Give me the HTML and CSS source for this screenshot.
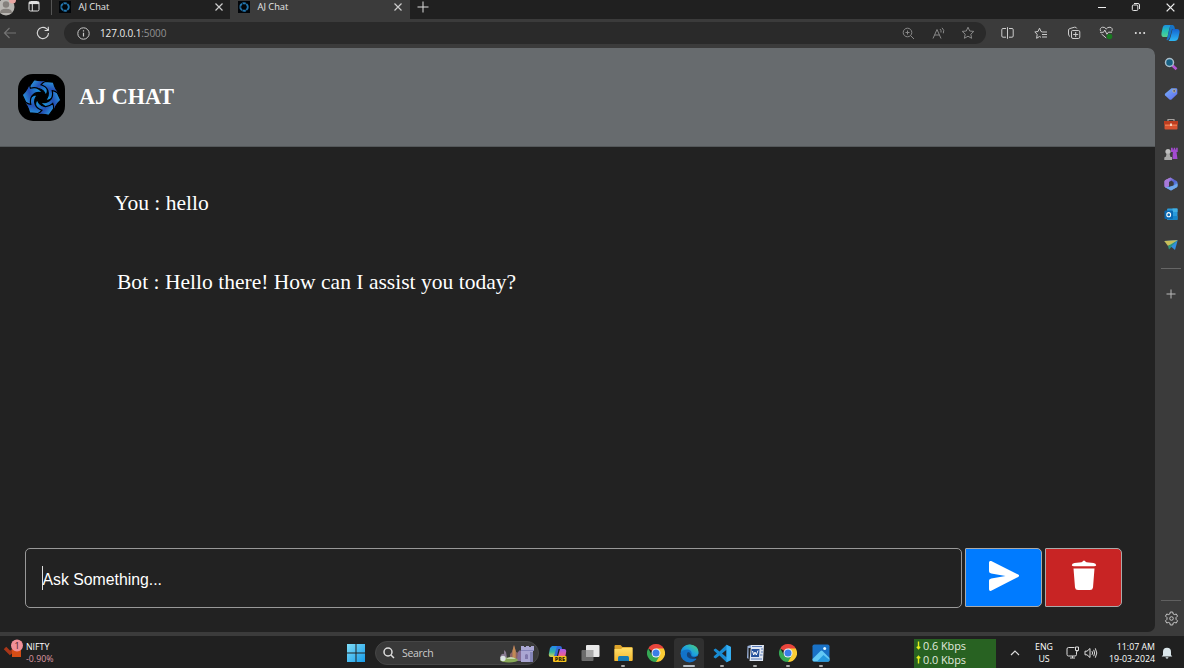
FILE: index.html
```html
<!DOCTYPE html>
<html lang="en">
<head>
<meta charset="utf-8">
<title>AJ Chat</title>
<link rel="stylesheet" href="styles.css">
</head>
<body>
<svg class="defs" aria-hidden="true">
  <defs>
    <linearGradient id="bladeFill" x1="0" y1="0" x2="1" y2=".7"><stop offset="0" stop-color="#2cb4ee"/><stop offset=".5" stop-color="#2450b4"/><stop offset="1" stop-color="#1b9be0"/></linearGradient>
    <linearGradient id="edgeA" x1="0" y1="1" x2="1" y2="0"><stop offset="0" stop-color="#0b6fcb"/><stop offset=".5" stop-color="#1fa4dd"/><stop offset="1" stop-color="#4fd66c"/></linearGradient>
    <linearGradient id="copA" x1="0" y1="0" x2="0" y2="1"><stop offset="0" stop-color="#1c8fe0"/><stop offset=".5" stop-color="#25c1b4"/><stop offset="1" stop-color="#58d08c"/></linearGradient>
    <linearGradient id="copB" x1="0" y1="0" x2="0" y2="1"><stop offset="0" stop-color="#1462cf"/><stop offset="1" stop-color="#2db8f4"/></linearGradient>
    <linearGradient id="preA" x1="0" y1="0" x2="0" y2="1"><stop offset="0" stop-color="#2186ef"/><stop offset=".55" stop-color="#35b5a0"/><stop offset="1" stop-color="#e4d646"/></linearGradient>
    <linearGradient id="preB" x1="0" y1="0" x2="0" y2="1"><stop offset="0" stop-color="#a45df0"/><stop offset=".6" stop-color="#e65ca0"/><stop offset="1" stop-color="#f68353"/></linearGradient>
    <linearGradient id="tagFill" x1="0" y1="0" x2="1" y2="1"><stop offset="0" stop-color="#77b2f6"/><stop offset="1" stop-color="#606af0"/></linearGradient>
    <linearGradient id="winFill" x1="0" y1="0" x2="1" y2="1"><stop offset="0" stop-color="#7fddf8"/><stop offset="1" stop-color="#169be8"/></linearGradient>
    <linearGradient id="folderFill" x1="0" y1="0" x2="0" y2="1"><stop offset="0" stop-color="#ffdf68"/><stop offset="1" stop-color="#f4b72e"/></linearGradient>
    <linearGradient id="officeFill" x1="0" y1="0" x2="1" y2="1"><stop offset="0" stop-color="#d696ed"/><stop offset=".5" stop-color="#5361d1"/><stop offset="1" stop-color="#64b8f4"/></linearGradient>
    <path id="blade" d="M-12.300 -11.500 L-7.500 -18.300 Q0 -16 7.500 -18.300 Q4 -16.500 2.500 -14.500 Q8.500 -9.500 4.500 -1.500 Q3 -8 -3 -9.200 Q-7.500 -9.800 -11.500 -6 Q-12.800 -9 -12.300 -11.500Z" fill="url(#bladeFill)" stroke="#000" stroke-width="1.200"/>
    <symbol id="swirl" viewBox="-24 -24 48 48">
      <use href="#blade"/><use href="#blade" transform="rotate(60)"/><use href="#blade" transform="rotate(120)"/><use href="#blade" transform="rotate(180)"/><use href="#blade" transform="rotate(240)"/><use href="#blade" transform="rotate(300)"/>
    </symbol>
    <symbol id="favswirl" viewBox="0 0 12 12">
      <circle cx="6" cy="6" r="3.800" fill="none" stroke="#2376ae" stroke-width="1.900" stroke-dasharray="3.400 .58"/>
    </symbol>
    <symbol id="chrome" viewBox="-9 -9 18 18">
      <path d="M0 0 L-7.800 -4.500 A9 9 0 0 1 7.800 -4.500Z" fill="#e8453c"/>
      <path d="M0 0 L7.800 -4.500 A9 9 0 0 1 0 9Z" fill="#fbcc34"/>
      <path d="M0 -4.500 H7.800 L3.500 1Z" fill="#fbcc34"/>
      <path d="M-7.800 -4.500 L-3.900 2.250 L3.900 2.250 L0 9 A9 9 0 0 1 -7.800 -4.500Z" fill="#35a854"/>
      <circle r="4.500" fill="#f1f5fb"/><circle r="3.500" fill="#3b7ee8"/>
    </symbol>
    <symbol id="close" viewBox="0 0 10 10"><path d="M1.500 1.500 L8.500 8.500 M8.500 1.500 L1.500 8.500" stroke="currentColor" stroke-width="1.200"/></symbol>
  </defs>
</svg>

<div class="desktop">
  <div class="tabstrip">
    <div class="profile"><svg width="16" height="16" viewBox="0 0 16 16"><circle cx="6" cy="7" r="8.500" fill="#b8b6b2"/><circle cx="6" cy="4.500" r="3.200" fill="#85817d"/><path d="M0 13 Q0 8.800 6 8.800 Q12 8.800 12 13Z" fill="#85817d"/><circle cx="12.500" cy="0" r="3.500" fill="#e8a6a2"/></svg></div>
    <div class="workspaces"><svg width="12" height="12" viewBox="0 0 12 12" fill="none" stroke="#e0e0e0"><rect x="1" y="1.500" width="10" height="9.500" rx="1.500"/><path d="M1 3 H11" stroke-width="2.200"/><path d="M4.300 4 V11"/></svg></div>
    <div class="tab">
      <span class="favicon"><svg width="12" height="12"><use href="#favswirl"/></svg></span><span class="tab-title">AJ Chat</span><svg class="tab-close" width="10" height="10"><use href="#close"/></svg>
    </div>
    <div class="tab active">
      <span class="favicon"><svg width="12" height="12"><use href="#favswirl"/></svg></span><span class="tab-title">AJ Chat</span><svg class="tab-close" width="10" height="10"><use href="#close"/></svg>
    </div>
    <div class="new-tab"><svg width="12" height="12" viewBox="0 0 12 12" stroke="#dedede"><path d="M6 .5 V11.500 M.5 6 H11.500"/></svg></div>
    <div class="window-controls">
      <svg width="10" height="10" viewBox="0 0 10 10" stroke="#eee"><path d="M1 5.500 H9"/></svg>
      <svg width="10" height="10" viewBox="0 0 10 10" fill="none" stroke="#e6e6e6"><rect x="1.300" y="3" width="5.500" height="5.500" rx="1"/><path d="M3 1.500 H7 Q8.500 1.500 8.500 3 V7"/></svg>
      <svg width="11" height="11" class="bright"><use href="#close"/></svg>
    </div>
  </div>

  <div class="toolbar">
    <svg class="back" width="14" height="14" viewBox="0 0 14 14" fill="none" stroke="#747474" stroke-width="1.200"><path d="M13 7 H1.500 M6.500 2 L1.500 7 L6.500 12"/></svg>
    <svg class="reload" width="14" height="14" viewBox="0 0 14 14" fill="none" stroke="#d8d8d8" stroke-width="1.100"><path d="M12.500 7 A5.600 5.600 0 1 1 10.500 2.700 L12.200 4.300 M12.300 .8 V4.500 H8.600"/></svg>
    <div class="address">
      <svg class="info" width="13" height="13" viewBox="0 0 13 13" fill="none" stroke="#c9c9c9"><circle cx="6.500" cy="6.500" r="5.700"/><path d="M6.500 5.700 V9.500 M6.500 3.300 V4.500" stroke-width="1.200"/></svg>
      <span class="url"><span class="host">127.0.0.1</span>:5000</span>
      <div class="address-icons">
        <svg width="13" height="13" viewBox="0 0 13 13" fill="none" stroke="#888"><circle cx="5.500" cy="5.500" r="4.300"/><path d="M8.600 8.600 L12 12 M3.500 5.500 H7.500 M5.500 3.500 V7.500"/></svg>
        <svg width="14" height="13" viewBox="0 0 14 13" fill="none" stroke="#888"><path d="M2 11.500 L6 2.500 L10 11.500 M3.600 8 H8.400 M9 2 Q10.500 3.500 10 5.500 M11 .8 Q13.800 3.200 12.300 6.300"/></svg>
        <svg width="14" height="14" viewBox="0 0 14 14" fill="none" stroke="#888"><path d="M7 1.200 L8.700 5 L12.800 5.400 L9.800 8.200 L10.600 12.300 L7 10.200 L3.400 12.300 L4.200 8.200 L1.200 5.400 L5.300 5Z"/></svg>
      </div>
    </div>
    <div class="tools">
      <svg width="13" height="12" viewBox="0 0 13 12" fill="none" stroke="#ccc"><path d="M5 1.500 H2 Q.8 1.500 .8 2.700 V9 Q.8 10.200 2 10.200 H5 M8 1.500 H11 Q12.200 1.500 12.200 2.700 V9 Q12.200 10.200 11 10.200 H8 M6.500 .2 V11.800"/></svg>
      <svg width="14" height="13" viewBox="0 0 14 13" fill="none" stroke="#ccc"><path d="M8.500 5 L7 4.500 L5.500 1.200 L4 4.500 L.8 5 L3.200 7.300 L2.600 11.300 L5.500 9.500 L7 10.300 M8.500 5 H13 M8 7.500 H13 M8 10 H13"/></svg>
      <svg width="14" height="14" viewBox="0 0 14 14" fill="none" stroke="#ccc"><path d="M3 10.500 Q1.500 10 1.500 8 V5 Q1 3 3 2.500 L7.500 1.200 Q9.500 1 9.800 2.500 M5.500 4.500 H11.500 Q12.800 4.500 12.800 6 V11 Q12.800 12.500 11.500 12.500 H6 Q4.500 12.500 4.500 11 V5.800 Q4.500 4.500 5.500 4.500 M8.700 6 V11 M6.200 8.500 H11.200"/></svg>
      <svg width="15" height="14" viewBox="0 0 15 14" fill="none" stroke="#ccc"><path d="M1.500 5 Q.5 1.700 3.700 1.200 Q6 1 7.200 3 Q8.500 1 11 1.200 Q14.300 2 12.800 5.300 M2.500 8 L7.200 12 M1 6.300 H4.500 L5.800 4 L8 8.300 L9.400 6.200 H13"/><circle cx="10.500" cy="10.500" r="2.800" fill="#187a20" stroke="none"/></svg>
      <svg width="12" height="12" viewBox="0 0 12 12" fill="#e4e4e4"><circle cx="1.800" cy="6" r="1"/><circle cx="6" cy="6" r="1"/><circle cx="10.200" cy="6" r="1"/></svg>
    </div>
    <div class="copilot"><svg width="19" height="18" viewBox="0 0 19 18"><path d="M4 1 H10.500 Q8.700 2 8 6 L6.500 13 H2.500 Q0 13 .5 9 L1.700 3.500 Q2.200 1 4 1Z" fill="url(#copA)"/><path d="M9.500 1 H12 Q13.500 1.500 14 5 H11 L9 13 Q8 17 5.500 16 L6.700 12Z" fill="#1673c5"/><path d="M11.500 5 H16 Q19 5 18.500 8.500 L17.300 14 Q16.500 17 13.500 17 H7.500 Q9 16 9.700 12.500Z" fill="url(#copB)"/></svg></div>
  </div>

  <div class="workspace">
    <main class="page">
      <header class="chat-header">
        <div class="logo"><svg width="47" height="47"><use href="#swirl"/></svg></div>
        <h1>AJ CHAT</h1>
      </header>
      <section class="messages">
        <p class="message you">You : hello</p>
        <p class="message bot">Bot : Hello there! How can I assist you today?</p>
      </section>
      <div class="composer">
        <div class="prompt"><span class="caret"></span><span>Ask Something...</span></div>
        <button class="send" aria-label="Send"><svg width="32" height="32" viewBox="0 0 32 32" fill="#fff"><path d="M1 2.500 Q1 .3 3.200 1.100 L30.200 14.600 Q32 15.800 30.200 17 L3.200 30.800 Q1 31.400 1 29.200 V20.500 Q1 18.600 3.300 18.400 L17.500 15.900 L3.300 13.600 Q1 13.200 1 11.200Z"/></svg></button>
        <button class="clear" aria-label="Clear"><svg width="26" height="32" viewBox="0 0 26 32" fill="#fff"><path d="M.8 5.300 Q1 3.200 3.500 2.900 L10.500 2.200 Q11.500 1.900 12 1 Q13 -.2 14 1 Q14.500 1.900 15.500 2.200 L22.500 2.900 Q25 3.200 25.200 5.300 Q25 6.200 23 6.200 H3 Q1 6.200 .8 5.300Z M2.500 8.500 H23.500 L22 27.500 Q21.700 30 19 30 H7 Q4.300 30 4 27.500Z"/></svg></button>
      </div>
    </main>
    <aside class="sidebar">
      <div class="side-icon"><svg width="14" height="14" viewBox="0 0 14 14"><path d="M8.500 8.500 L12.500 12.200" stroke="#b455d5" stroke-width="2.600"/><circle cx="5.500" cy="5.500" r="4" fill="#176184" stroke="#a9bdca" stroke-width="1.500"/></svg></div>
      <div class="side-icon"><svg width="14" height="14" viewBox="0 0 14 14"><path d="M7.500 1.200 H12 Q13.300 1.200 13.300 2.500 V7 L7.500 12.500 Q6.500 13.200 5.500 12.400 L1.200 8.500 Q.3 7.500 1.200 6.500Z" fill="url(#tagFill)"/><circle cx="10.200" cy="3.900" r="1.400" fill="#4a5587" stroke="#e3c875" stroke-width=".7"/></svg></div>
      <div class="side-icon"><svg width="14" height="12" viewBox="0 0 14 12"><path d="M4 3 V1.500 H10 V3" fill="none" stroke="#a6a19e" stroke-width="1.200"/><rect x=".5" y="3" width="13" height="8.500" rx="1" fill="#d65331"/><path d="M0 3 H14 V6.500 H0Z" fill="#bb3d20"/><path d="M1 7.200 H13" stroke="#f58a5c"/><rect x="6" y="5.500" width="2" height="2.500" fill="#f2d2bd"/></svg></div>
      <div class="side-icon"><svg width="14" height="14" viewBox="0 0 14 14"><path d="M7 .8 H8.700 V2.500 H9.700 V.8 H11.200 V2.500 H12.200 V.8 H13.700 V5 H12.500 L13.500 12 H8.500 L8.800 5 H7Z" fill="#a44bd1"/><circle cx="4" cy="4.500" r="2.600" fill="#bebebe"/><path d="M2.500 6.500 H5.500 L6.500 10 H8 V13 H.3 V10.500 L2 9.500Z" fill="#a9a9a9"/></svg></div>
      <div class="side-icon"><svg width="14" height="14" viewBox="0 0 14 14"><path d="M6.500 .5 L12.500 4 Q13.500 4.700 13.500 6 V9 Q13.300 10 12.300 10.600 L7 13.500 L1.500 10.500 Q.5 10 .5 8.700 V4.500 Q.5 3.500 1.500 3Z" fill="url(#officeFill)"/><path d="M7.500 3.500 L9.700 5.500 V8.500 L5 10 V5Z" fill="#3b3b3d"/><path d="M.5 9 L5 10 L9.700 8.500 L13.500 6.500 V9 Q13.300 10 12.300 10.600 L7 13.500 L1.500 10.500Z" fill="#70a9ec"/><path d="M6.500 .5 Q4.500 3 5 9 L1.500 10.500 Q.5 10 .5 8.700 V4.500 Q.5 3.500 1.500 3Z" fill="#a879d8"/></svg></div>
      <div class="side-icon"><svg width="14" height="13" viewBox="0 0 14 13"><rect x="3" y=".5" width="10.500" height="11.500" rx="1" fill="#299bdc"/><path d="M8.500 .5 H13.500 V4 H8.500Z" fill="#42b0e3"/><path d="M4 8 H13.500 V12 H4Z" fill="#1685c9"/><rect x=".5" y="2.500" width="8.500" height="8.500" rx="1" fill="#0968b1"/><ellipse cx="4.700" cy="6.700" rx="1.900" ry="2.100" fill="none" stroke="#fff" stroke-width="1.100"/></svg></div>
      <div class="side-icon"><svg width="14" height="12" viewBox="0 0 14 12"><path d="M.3 2 L13.700 1.300 L7 7Z" fill="#7fc8dd"/><path d="M.3 2 L4 7 L13.700 1.300Z" fill="#c7be5a"/><path d="M4 7 L13.700 1.300 L5 10.500Z" fill="#2d977b"/><path d="M7 7.500 L13.700 1.300 L11 11Z" fill="#338ede"/></svg></div>
      <div class="side-rule"></div>
      <div class="side-add"><svg width="10" height="10" viewBox="0 0 10 10" stroke="#bbb"><path d="M5 .5 V9.500 M.5 5 H9.500"/></svg></div>
      <div class="side-bottom">
        <div class="side-line"></div>
        <svg width="15" height="15" viewBox="0 0 15 15" fill="none" stroke="#c8c8c8"><path d="M6.300 1 H8.700 L9.200 3 L10.300 3.600 L12.300 3 L13.500 5.100 L12 6.600 V8.300 L13.500 9.800 L12.300 12 L10.300 11.400 L9.200 12 L8.700 14 H6.300 L5.800 12 L4.700 11.400 L2.700 12 L1.500 9.800 L3 8.300 V6.600 L1.500 5.100 L2.700 3 L4.700 3.600 L5.800 3Z" stroke-linejoin="round"/><circle cx="7.500" cy="7.500" r="1.800"/></svg>
      </div>
    </aside>
  </div>

  <footer class="taskbar">
    <div class="widget">
      <svg width="22" height="19" viewBox="0 0 22 19"><path d="M1 9 L6 14 L12 9" fill="none" stroke="#a93618" stroke-width="3.500"/><path d="M8 11 L17 9 V18 H8Z" fill="#d64d15"/><circle cx="13" cy="6.500" r="6" fill="#f18f98"/><text x="13" y="10" class="badge-text">1</text></svg>
      <div class="stock"><span>NIFTY</span><span class="down">-0.90%</span></div>
    </div>
    <div class="start"><svg width="18" height="18" viewBox="0 0 18 18" fill="url(#winFill)"><path d="M0 0 H8.500 V8.500 H0Z M9.500 0 H18 V8.500 H9.500Z M0 9.500 H8.500 V18 H0Z M9.500 9.500 H18 V18 H9.500Z"/></svg></div>
    <div class="search">
      <svg width="12" height="12" viewBox="0 0 12 12" fill="none" stroke="#ddd" stroke-width="1.500"><circle cx="5" cy="5" r="4"/><path d="M8 8 L11 11"/></svg>
      <span>Search</span>
      <svg class="castle" width="36" height="19" viewBox="0 0 36 19"><path d="M1 14 Q2 9 5 10 V6 L7 8 L8 14Z" fill="#86798f"/><path d="M11 16 V10 L13 8 L15 1 L17 8 L20 9 V17Z" fill="#8b6265"/><path d="M13.500 7 L15 1 L16.700 7 V14 H13.500Z" fill="#c28a55"/><path d="M19 8 L21 6 L23 8 V17 H18Z" fill="#846d96"/><path d="M22 2 H25 V3 H27 V2 H30 V3 H32 V2 H35 V7 H34 V18 H22Z" fill="#aaa7d3"/><path d="M22 6 H35 V7 H22Z M31 8 H34 V18 H31Z" fill="#8585b9"/><path d="M26 15 V11 Q27.500 9 29 11 V15Z" fill="#8079ac"/><ellipse cx="10" cy="16" rx="9" ry="2.500" fill="#88a957"/><circle cx="4" cy="14.500" r="2.700" fill="#dce4e5"/><path d="M7 15 Q12 11 17 15Z" fill="#c5d5b2"/></svg>
    </div>
    <nav class="apps">
      <div class="app"><svg width="19" height="19" viewBox="0 0 19 19"><path d="M4 2 H10 L7 13 H3 Q0 13 1 9 L2 4Z" fill="url(#preA)"/><path d="M9 2 H12 Q14 2 14 5 H10.500 L9 12 H6Z" fill="#3268d8"/><path d="M12 5 H16 Q19 5 18 9 L17 14 H9.500Z" fill="url(#preB)"/><rect x="5" y="12" width="13.500" height="6" rx="1" fill="#f6c21d"/><text x="11.800" y="17" class="pre-text">PRE</text></svg></div>
      <div class="app"><svg width="19" height="18" viewBox="0 0 19 18"><rect x=".5" y="6" width="12" height="11" rx="1" fill="#6c6c6c"/><rect x="5" y="1" width="13.500" height="12" rx="1" fill="#e9e9e9"/><path d="M5 6 H12.500 V13 H5Z" fill="#a9a9a9"/></svg></div>
      <div class="app open"><svg width="19" height="18" viewBox="0 0 19 18"><path d="M.5 2 Q.5 1 1.500 1 H6.500 L8.500 3 H17.500 Q18.500 3 18.500 4 V16 Q18.500 17 17.500 17 H.5Z" fill="#dca32b"/><path d="M.5 5 H7 L8.500 3.800 H18.500 V16 Q18.500 17 17.500 17 H1.500 Q.5 17 .5 16Z" fill="url(#folderFill)"/><path d="M4 17 V13.500 Q4 12 5.500 12 H13.500 Q15 12 15 13.500 V17Z" fill="#167bb4"/></svg></div>
      <div class="app"><svg width="18" height="18"><use href="#chrome"/></svg></div>
      <div class="app open focused"><svg width="19" height="19" viewBox="0 0 19 19"><circle cx="9.500" cy="9.500" r="9" fill="#1272c9"/><path d="M.8 8 Q2.500 .5 10 .5 Q18 1 18.500 8 Q18.200 12.300 14 12.300 Q10.700 12.300 11.700 9.500 Q11.500 5.500 7 5.500 Q3 5.500 .8 8Z" fill="url(#edgeA)"/><path d="M8 8 Q6 10 7.500 13 Q10.500 16 16.500 14.500 L17.800 12.800 Q11 14 10.800 10.500 Q10.500 8 8 8Z" fill="#14437b"/><path d="M14.500 13.600 Q18 13 19 10 V14 L16.800 15Z" fill="#2b2b2b"/></svg></div>
      <div class="app open"><svg width="19" height="19" viewBox="0 0 19 19"><path d="M13.500 .8 L18 3 V16 L13.500 18.200 L6.500 11.500 L2.700 14.500 L.8 13.500 V12.300 L4 9.500 L.8 6.600 V5.500 L2.700 4.500 L6.500 7.500Z M13.500 5.800 L9 9.500 L13.500 13.200Z" fill="#198bd1" fill-rule="evenodd"/><path d="M13.500 .8 L18 3 V16 L13.500 18.200Z" fill="#34aef1"/></svg></div>
      <div class="app open"><svg width="19" height="18" viewBox="0 0 19 18"><path d="M5 1 H18 L17 17 H3.500Z" fill="#dfe6f2"/><path d="M1.500 2 L5 1 L5 4 H2.500 V15 L1 14Z" fill="#9ab1d8"/><path d="M5.500 5 H13.500 L13 13 H5Z" fill="#25509b"/><path d="M6.500 7 L7.700 11 L9 8 L10.300 11 L12 6.500" stroke="#fff" fill="none"/><path d="M6 2.500 H16 M15 5 H17 M15 8 H17 M14 11 H16.500 M5 15 H16" stroke="#5a7cb9"/></svg></div>
      <div class="app open"><svg width="18" height="18"><use href="#chrome"/></svg></div>
      <div class="app open"><svg width="18" height="18" viewBox="0 0 18 18"><rect x=".5" y=".5" width="17" height="17" rx="1.800" fill="#1971c5"/><path d="M.5 15 L8.500 7 Q9.500 6 10.500 7 L17.500 14 V16 Q17.500 17.500 16 17.500 H2 Q.5 17.500 .5 16Z" fill="#62c9f5"/><path d="M5 17.500 L11.500 11 L17.500 16 Q17.500 17.500 16 17.500Z" fill="#2599df"/><circle cx="12.700" cy="4.500" r="1.500" fill="#e5f8ff"/></svg></div>
    </nav>
    <div class="tray">
      <div class="network"><div><svg width="5" height="9" viewBox="0 0 5 9" stroke="#e2ed1c" fill="none"><path d="M2.500 .5 V7.500 M.8 5.700 L2.500 7.700 L4.200 5.700" stroke-width="1.400"/></svg>0.6 Kbps</div><div><svg width="5" height="9" viewBox="0 0 5 9" stroke="#e2ed1c" fill="none"><path d="M2.500 8.500 V1.500 M.8 3.300 L2.500 1.300 L4.200 3.300" stroke-width="1.400"/></svg>0.0 Kbps</div></div>
      <svg class="chevron" width="10" height="8" viewBox="0 0 10 8" fill="none" stroke="#ddd" stroke-width="1.200"><path d="M1 6 L5 2 L9 6"/></svg>
      <div class="language"><span>ENG</span><span>US</span></div>
      <svg class="monitor" width="14" height="13" viewBox="0 0 14 13" fill="none" stroke="#ddd"><path d="M8.500 1.500 H2.500 Q1 1.500 1 3 V8.500 Q1 10 2.500 10 H9 Q10.500 10 10.500 8.500 V5.500 M4 12 H9 M6.500 10 V12 M9.500 1 H12.500 V4.500 H9.500Z M11 4.500 V6"/></svg>
      <svg class="speaker" width="14" height="12" viewBox="0 0 14 12" fill="none" stroke="#ddd"><path d="M1 4.200 H3 L6 1.500 V10.500 L3 7.800 H1Z M8 4.200 Q9.200 6 8 7.800 M9.700 2.800 Q11.500 6 9.700 9.200 M11.300 1.300 Q14.300 6 11.300 10.700"/></svg>
      <div class="clock"><span>11:07 AM</span><span>19-03-2024</span></div>
      <svg class="bell" width="12" height="12" viewBox="0 0 12 12" fill="#dce7ec"><path d="M2 8 V5 Q2 .8 6 .8 Q10 .8 10 5 V8 L11.300 9.600 H.7Z M4.500 10.300 H7.500 Q7.300 11.700 6 11.700 Q4.700 11.700 4.500 10.300Z"/></svg>
    </div>
  </footer>
</div>
</body>
</html>
```
FILE: styles.css
```css
* { box-sizing: border-box; }
body { margin: 0; background: #202020; color: #fff; font-family: "Open Sans", "Noto Sans", sans-serif; }
svg { display: block; flex: none; overflow: visible; }
.defs { position: absolute; width: 0; height: 0; }
.desktop { width: 1184px; height: 668px; display: flex; flex-direction: column; overflow: hidden; background: #3b3b3b; }

.tabstrip { height: 19px; display: flex; background: #202020; }
.profile { width: 28px; overflow: hidden; }
.workspaces { width: 24px; border-right: 1px solid #555; height: 15px; }
.tab { width: 178px; height: 19px; display: flex; align-items: flex-start; padding: 1px 6px 0 7px; }
.tab.active { width: 180px; background: #3b3b3b; padding: 1px 7px 0 8px; }
.favicon { width: 12px; height: 12px; background: #020509; }
.tab-title { margin-left: 7.5px; font-size: 9.3px; line-height: 11px; font-weight: 500; color: #e7e7e7; }
.tab-close { margin: 1px 0 0 auto; color: #ccc; }
.new-tab { padding: 1px 7px; }
.window-controls { margin-left: auto; display: flex; gap: 24px; padding: 2px 8px 0 0; }
.bright { color: #eee; }

.toolbar { height: 28.500px; display: flex; align-items: center; background: #3b3b3b; }
.back { margin-left: 3px; }
.reload { margin-left: 19px; }
.address { width: 923px; height: 22px; margin-left: 14px; border-radius: 11px; background: #2a2a2a; display: flex; align-items: center; padding: 0 3px 0 13px; }
.url { margin-left: 10px; font-size: 10px; letter-spacing: -.1px; color: #929292; line-height: 12px; }
.host { color: #ececec; }
.address-icons { margin-left: auto; display: grid; grid-template-columns: repeat(3, 30px); justify-items: center; align-items: center; }
.tools { margin-left: 4.800px; display: grid; grid-template-columns: repeat(5, 33px); justify-items: center; align-items: center; }
.copilot { width: 28px; display: grid; place-items: center; }

.workspace { height: 588.500px; display: flex; }
.page { width: 1155px; height: 584.500px; display: flex; flex-direction: column; background: #222; border-radius: 0 7px 7px 0; overflow: hidden; }
.chat-header { flex: none; height: 99.500px; background: #676b6e; display: flex; align-items: center; padding: 1px 0 0 18px; gap: 14px; border-bottom: 1px solid #54585a; }
.logo { width: 47px; height: 47px; border-radius: 15px; background: #000; }
.chat-header h1 { margin: 0; font: bold 22.2px/26px "Liberation Serif", serif; }
.messages { flex: none; height: 401.200px; padding: 43px 0 0 114px; font-family: "Liberation Serif", serif; font-size: 21.55px; }
.message { margin: 0; line-height: 26px; }
.message.bot { margin: 53px 0 0 3px; }
.composer { display: flex; align-items: flex-start; padding-left: 24.500px; gap: 3px; }
.prompt { width: 937.500px; height: 59.500px; border: 1px solid #999; border-radius: 5px; display: flex; align-items: center; padding: 5px 0 0 17px; font: 15.8px/20px "Liberation Sans", sans-serif; }
.caret { width: 1px; height: 24px; margin: -5px 0 0 -1px; background: #ddd; }
.send, .clear { width: 77px; height: 59px; margin: 0; padding: 0 0 4px; border: 1px solid #aaa; border-radius: 1px 5px 5px 1px; display: grid; place-items: center; }
.send { background: #007bff; }
.clear { background: #c82424; }

.sidebar { width: 29px; display: flex; flex-direction: column; align-items: center; padding: 1.500px 0 0 3px; }
.side-icon { flex: none; height: 30.100px; display: grid; place-items: center; }
.side-rule { flex: none; width: 20px; height: 1px; margin-top: 8.500px; background: #666; }
.side-add { margin-top: 19.500px; }
.side-bottom { margin-top: auto; display: flex; flex-direction: column; align-items: center; gap: 10px; padding-bottom: 10px; }
.side-line { width: 20px; height: 1px; background: #606060; }

.taskbar { height: 32px; display: flex; background: #202020; }
.widget { width: 347px; display: flex; padding: 3px 0 0 4px; }
.badge-text { font-size: 9px; fill: #492125; text-anchor: middle; }
.pre-text { font-size: 5.5px; font-weight: 800; fill: #332809; text-anchor: middle; }
.stock { display: flex; flex-direction: column; font-size: 8.8px; line-height: 12px; padding-top: 2px; font-weight: 500; }
.down { color: #dd98a0; }
.start { padding-top: 8px; }
.search { width: 164px; height: 24px; margin: 5px 0 0 10px; border-radius: 12px; border: 1px solid #464646; background: #393939; display: flex; align-items: center; padding: 0 3px 0 7px; font-size: 10.5px; color: #ccc; }
.search span { margin: -1px 0 0 7px; letter-spacing: -.3px; }
.castle { margin-left: auto; }
.apps { display: grid; grid-template-columns: repeat(9, 33px); margin-left: 1.500px; }
.app { position: relative; display: grid; place-items: center; margin: 2px 1.5px 0; border-radius: 4px 4px 0 0; }
.app.open::after { content: ""; position: absolute; bottom: 1px; left: 13px; width: 4px; height: 2px; border-radius: 1px; background: #aaa; }
.app.focused { background: #303030; }
.app.focused::after { left: 9px; width: 12px; background: #b6bdc4; }
.tray { margin-left: auto; display: flex; align-items: center; }
.network { width: 82px; height: 29px; align-self: flex-end; background: #286222; font-size: 10.9px; line-height: 13.5px; letter-spacing: -.05px; padding: 0 0 0 2px; color: #e2eadf; }
.network div { display: flex; align-items: center; gap: 2px; }
.chevron { margin: 1px 0 0 14px; }
.language { width: 28px; margin-left: 10px; display: flex; flex-direction: column; text-align: center; font-size: 8.8px; line-height: 12px; padding-top: 2px; font-weight: 500; }
.monitor { margin: 1px 0 0 8px; }
.speaker { margin: 1px 0 0 4px; }
.clock { width: 55px; margin-left: 2px; display: flex; flex-direction: column; align-items: flex-end; font-size: 8.8px; line-height: 12px; padding-top: 1px; white-space: nowrap; font-weight: 500; }
.bell { margin: 2px 11px 0 6px; }
```
